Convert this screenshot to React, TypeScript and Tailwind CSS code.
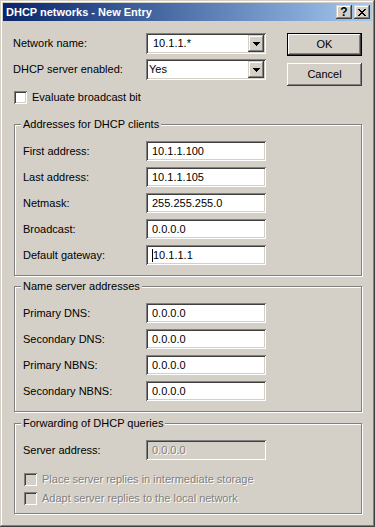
import React from "react";

// Windows-Classic-Dialog "DHCP networks - New Entry"
const sunken =
  "shadow-[inset_1px_1px_#808080,inset_-1px_-1px_#ffffff,inset_2px_2px_#404040,inset_-2px_-2px_#d4d0c8]";
const raised =
  "shadow-[inset_-1px_-1px_#404040,inset_1px_1px_#ffffff,inset_-2px_-2px_#808080]";
const raisedSmall =
  "shadow-[inset_-1px_-1px_#404040,inset_1px_1px_#d4d0c8,inset_-2px_-2px_#808080,inset_2px_2px_#ffffff]";
const disabledText = "text-[#808080] [text-shadow:1px_1px_0_#ffffff]";

function Arrow() {
  return (
    <svg width="7" height="4" viewBox="0 0 7 4" className="block">
      <path d="M0 0h7v1H0zM1 1h5v1H1zM2 2h3v1H2zM3 3h1v1H3z" fill="#000" />
    </svg>
  );
}

function Combo({ value, pl }: { value: string; pl: string }) {
  return (
    <div className={`w-[120px] h-[21px] bg-white flex items-center p-[2px] ${sunken}`}>
      <span className={`flex-1 ${pl}`}>{value}</span>
      <div className={`w-[16px] h-[17px] bg-[#d4d0c8] flex items-center justify-center ${raisedSmall}`}>
        <Arrow />
      </div>
    </div>
  );
}

function Checkbox({ label, disabled }: { label: string; disabled?: boolean }) {
  return (
    <div className="flex items-center h-[13px]">
      <div className={`w-[13px] h-[13px] ${disabled ? "bg-[#d4d0c8]" : "bg-white"} ${sunken}`} />
      <span className={`ml-[5px] ${disabled ? disabledText : ""}`}>{label}</span>
    </div>
  );
}

function Field({
  label,
  value,
  caret,
  disabled,
}: {
  label: string;
  value: string;
  caret?: boolean;
  disabled?: boolean;
}) {
  return (
    <div className="flex items-center h-[20px]">
      <span className="w-[123px]">{label}</span>
      <div
        className={`w-[120px] h-[20px] flex items-center pl-[6px] ${disabled ? "bg-[#d4d0c8]" : "bg-white"} ${sunken}`}
      >
        {caret && <span className="w-px h-[13px] bg-black" />}
        <span className={disabled ? disabledText : ""}>{value}</span>
      </div>
    </div>
  );
}

function Group({
  title,
  className,
  children,
}: {
  title: string;
  className: string;
  children: React.ReactNode;
}) {
  return (
    <div
      className={`relative ml-[1px] w-[348px] border border-[#808080] shadow-[inset_1px_1px_#ffffff,1px_1px_#ffffff] pt-[16px] pl-[8px] ${className}`}
    >
      <span className="absolute left-[6px] top-[-8px] bg-[#d4d0c8] px-[2px] leading-[14px]">{title}</span>
      {children}
    </div>
  );
}

export default function App() {
  return (
    <div
      className={`w-[375px] h-[527px] bg-[#d4d0c8] p-[3px] flex flex-col text-[11px] leading-[13px] text-black font-['Liberation_Sans',Arial,sans-serif] shadow-[inset_-1px_-1px_#404040,inset_1px_1px_#d4d0c8,inset_-2px_-2px_#808080,inset_2px_2px_#ffffff] overflow-hidden`}
    >
      {/* Titelleiste */}
      <div className="h-[18px] flex items-center bg-gradient-to-r from-[#0a246a] to-[#a6caf0] pl-[3px] pr-[2px]">
        <span className="flex-1 font-bold text-white">DHCP networks - New Entry</span>
        <div className={`w-[16px] h-[14px] bg-[#d4d0c8] flex items-center justify-center font-bold text-[12px] ${raisedSmall}`}>
          ?
        </div>
        <div className={`ml-[2px] w-[16px] h-[14px] bg-[#d4d0c8] flex items-center justify-center ${raisedSmall}`}>
          <svg width="8" height="7" viewBox="0 0 8 7" className="block">
            <path
              d="M0 0h2v1H0zM6 0h2v1H6zM1 1h2v1H1zM5 1h2v1H5zM2 2h4v1H2zM3 3h2v1H3zM2 4h4v1H2zM1 5h2v1H1zM5 5h2v1H5zM0 6h2v1H0zM6 6h2v1H6z"
              fill="#000"
            />
          </svg>
        </div>
      </div>

      <div className="flex flex-col pl-[10px]">
        <div className="flex mt-[12px]">
          <div className="flex flex-col w-[253px]">
            <div className="flex items-center h-[21px]">
              <span className="w-[133px]">Network name:</span>
              <Combo value="10.1.1.*" pl="pl-[5px]" />
            </div>
            <div className="flex items-center h-[21px] mt-[5px]">
              <span className="w-[133px]">DHCP server enabled:</span>
              <Combo value="Yes" pl="pl-[1px]" />
            </div>
            <div className="mt-[11px] ml-[1px]">
              <Checkbox label="Evaluate broadcast bit" />
            </div>
          </div>
          <div className="flex flex-col ml-[21px]">
            <div className="w-[75px] h-[23px] border border-black">
              <div className={`w-full h-full flex items-center justify-center ${raised}`}>OK</div>
            </div>
            <div className={`mt-[7px] w-[75px] h-[23px] flex items-center justify-center ${raised}`}>Cancel</div>
          </div>
        </div>

        <Group title="Addresses for DHCP clients" className="mt-[20px] h-[152px]">
          <div className="flex flex-col gap-[6px]">
            <Field label="First address:" value="10.1.1.100" />
            <Field label="Last address:" value="10.1.1.105" />
            <Field label="Netmask:" value="255.255.255.0" />
            <Field label="Broadcast:" value="0.0.0.0" />
            <Field label="Default gateway:" value="10.1.1.1" caret />
          </div>
        </Group>

        <Group title="Name server addresses" className="mt-[10px] h-[126px]">
          <div className="flex flex-col gap-[6px]">
            <Field label="Primary DNS:" value="0.0.0.0" />
            <Field label="Secondary DNS:" value="0.0.0.0" />
            <Field label="Primary NBNS:" value="0.0.0.0" />
            <Field label="Secondary NBNS:" value="0.0.0.0" />
          </div>
        </Group>

        <Group title="Forwarding of DHCP queries" className="mt-[11px] h-[91px]">
          <Field label="Server address:" value="0.0.0.0" disabled />
          <div className="mt-[13px] ml-[1px] flex flex-col gap-[6px]">
            <Checkbox label="Place server replies in intermediate storage" disabled />
            <Checkbox label="Adapt server replies to the local network" disabled />
          </div>
        </Group>
      </div>
    </div>
  );
}
